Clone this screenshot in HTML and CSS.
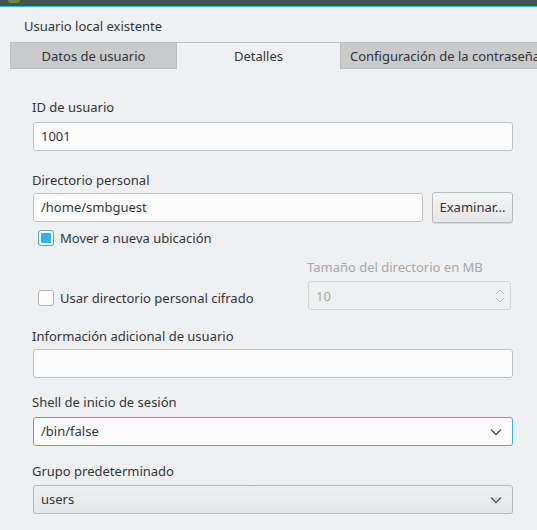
FILE: index.html
```html
<!DOCTYPE html>
<html>
<head>
<meta charset="utf-8">
<link rel="stylesheet" href="styles.css">
</head>
<body>
<div class="titlebar"><span class="app-icon"></span></div>
<div class="window">
  <div class="heading">Usuario local existente</div>
  <div class="tabs">
    <div class="tab tab-first">Datos de usuario</div>
    <div class="tab tab-active">Detalles</div>
    <div class="tab tab-last">Configuración de la contraseña</div>
  </div>
  <div class="panel">
    <div class="field f-id">
      <div class="label">ID de usuario</div>
      <div class="input">1001</div>
    </div>
    <div class="field f-dir">
      <div class="label">Directorio personal</div>
      <div class="row">
        <div class="input grow">/home/smbguest</div>
        <div class="button">Examinar...</div>
      </div>
    </div>
    <div class="check-row move">
      <span class="checkbox checked"><span class="check-fill"></span></span>
      <span>Mover a nueva ubicación</span>
    </div>
    <div class="split">
      <div class="check-row low">
        <span class="checkbox"></span>
        <span>Usar directorio personal cifrado</span>
      </div>
      <div class="size">
        <div class="label disabled">Tamaño del directorio en MB</div>
        <div class="spin">
          <span>10</span>
          <svg class="spin-arrows" width="12" height="18" viewBox="0 0 12 18"><path d="M2 7 L6 3 L10 7 M2 11 L6 15 L10 11" fill="none" stroke="#b9bbbd" stroke-width="1"/></svg>
        </div>
      </div>
    </div>
    <div class="field f-info">
      <div class="label">Información adicional de usuario</div>
      <div class="input"></div>
    </div>
    <div class="field f-shell">
      <div class="label">Shell de inicio de sesión</div>
      <div class="input combo focus">
        <span>/bin/false</span>
        <svg class="chev" width="12" height="8" viewBox="0 0 12 8"><path d="M1 1.5 L6 6.5 L11 1.5" fill="none" stroke="#4d5257" stroke-width="1.3"/></svg>
      </div>
    </div>
    <div class="field f-group">
      <div class="label">Grupo predeterminado</div>
      <div class="input combo button-like">
        <span>users</span>
        <svg class="chev" width="12" height="8" viewBox="0 0 12 8"><path d="M1 1.5 L6 6.5 L11 1.5" fill="none" stroke="#4d5257" stroke-width="1.3"/></svg>
      </div>
    </div>
  </div>
</div>
</body>
</html>
```
FILE: styles.css
```css
html, body {
  margin: 0;
  padding: 0;
  background: #eff0f1;
  font-family: "Noto Sans", "DejaVu Sans", sans-serif;
  font-size: 13px;
  color: #31363b;
  overflow: hidden;
}
.titlebar {
  height: 6px;
  background: #475057;
  border-bottom: 1px solid #3daee9;
  position: relative;
}
.app-icon {
  position: absolute;
  left: 8px;
  top: 0;
  width: 12px;
  height: 3px;
  background: #6a8a3a;
  border-radius: 0 0 6px 6px;
}
.heading {
  padding-left: 24px;
  margin-top: 10px;
  height: 18px;
  line-height: 18px;
}
.tabs {
  display: flex;
  margin-top: 7px;
  margin-left: 10px;
  height: 27px;
}
.tab {
  box-sizing: border-box;
  height: 27px;
  line-height: 26px;
  text-align: center;
  white-space: nowrap;
  overflow: hidden;
  background: #c9cacb;
  border-top: 1px solid #bcbebf;
  border-bottom: 1px solid #bcbebf;
}
.tab-first {
  width: 166px;
  border-left: 1px solid #bcbebf;
}
.tab-active {
  width: 165px;
  background: #eff0f1;
  border: 1px solid #bcbebf;
  border-bottom: none;
}
.tab-last {
  flex: 1;
  text-align: left;
  padding-left: 9px;
}
.panel {
  padding: 29px 24px 0 33px;
  width: 480px;
}
.label {
  height: 18px;
  line-height: 18px;
  margin-left: -1px;
  margin-bottom: 5px;
}
.label.disabled {
  color: #a5a7a9;
}
.f-id .label { margin-bottom: 6px; }
.f-id { margin-bottom: 20px; }
.f-dir .label { margin-bottom: 3px; }
.f-info .label { margin-bottom: 4px; }
.f-info { margin-bottom: 15px; }
.f-shell .label { margin-bottom: 6px; }
.f-shell { margin-bottom: 16px; }
.input {
  box-sizing: border-box;
  height: 29px;
  border: 1px solid #bfc1c3;
  border-radius: 3px;
  background: #fcfcfc;
  padding: 0 7px;
  line-height: 27px;
}
.row {
  display: flex;
  align-items: center;
  gap: 9px;
}
.grow {
  flex: 1;
}
.button {
  box-sizing: border-box;
  width: 81px;
  height: 31px;
  line-height: 29px;
  text-align: center;
  border: 1px solid #b7b9bb;
  border-radius: 3px;
  background: linear-gradient(#f3f4f4, #e6e7e8);
  box-shadow: 0 1px 1px rgba(0,0,0,0.12);
}
.check-row {
  display: flex;
  align-items: center;
  gap: 6px;
  margin-left: 5px;
  height: 18px;
}
.check-row.move {
  margin-top: 6px;
}
.checkbox {
  box-sizing: border-box;
  width: 16px;
  height: 16px;
  border: 1px solid #b2b4b6;
  border-radius: 3px;
  background: #fcfcfc;
  display: flex;
  align-items: center;
  justify-content: center;
}
.checkbox.checked {
  border-color: #3daee9;
}
.check-fill {
  width: 10px;
  height: 10px;
  background: #3daee9;
  border-radius: 1px;
}
.split {
  display: flex;
  justify-content: space-between;
  margin-top: 11px;
  margin-bottom: 17px;
}
.check-row.low {
  margin-top: 31px;
}
.size {
  width: 203px;
  margin-right: 2px;
}
.spin {
  box-sizing: border-box;
  height: 29px;
  border: 1px solid #d3d4d5;
  border-radius: 3px;
  background: #eff0f1;
  color: #a5a7a9;
  padding: 0 7px;
  display: flex;
  align-items: center;
  justify-content: space-between;
}
.spin-arrows {
  margin-right: -3px;
}
.combo {
  display: flex;
  align-items: center;
  justify-content: space-between;
}
.combo .chev {
  margin-right: 3px;
}
.focus {
  border-color: #3daee9;
}
.button-like {
  background: linear-gradient(#eeeff0, #e6e7e8);
  border-color: #b7b9bb;
  box-shadow: 0 1px 1px rgba(0,0,0,0.1);
}
```
